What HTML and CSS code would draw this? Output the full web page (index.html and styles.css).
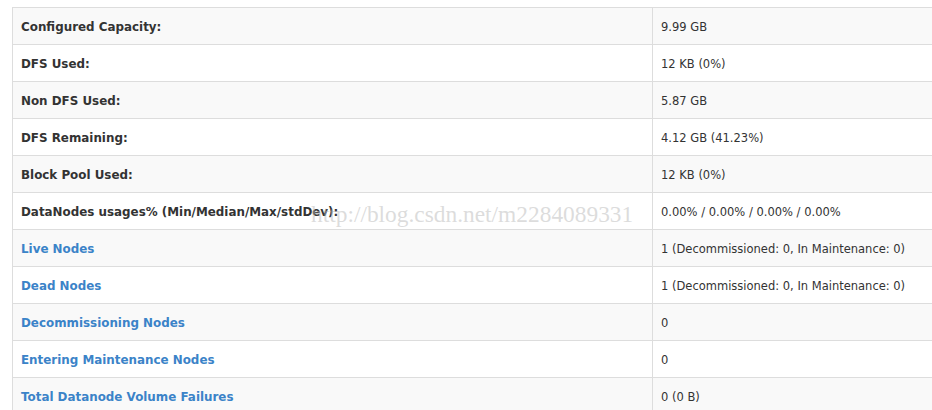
FILE: index.html
```html
<!DOCTYPE html>
<html>
<head>
<meta charset="utf-8">
<link rel="stylesheet" href="styles.css">
</head>
<body>
<div class="page">
  <table class="info">
    <colgroup><col class="c-label"><col class="c-value"></colgroup>
    <tbody>
      <tr><th>Configured Capacity:</th><td>9.99 GB</td></tr>
      <tr><th>DFS Used:</th><td>12 KB (0%)</td></tr>
      <tr><th>Non DFS Used:</th><td>5.87 GB</td></tr>
      <tr><th>DFS Remaining:</th><td>4.12 GB (41.23%)</td></tr>
      <tr><th>Block Pool Used:</th><td>12 KB (0%)</td></tr>
      <tr><th class="wm-cell">DataNodes usages% (Min/Median/Max/stdDev):<span class="watermark">http://blog.csdn.net/m2284089331</span></th><td>0.00% / 0.00% / 0.00% / 0.00%</td></tr>
      <tr><th><a href="#">Live Nodes</a></th><td>1 (Decommissioned: 0, In Maintenance: 0)</td></tr>
      <tr><th><a href="#">Dead Nodes</a></th><td>1 (Decommissioned: 0, In Maintenance: 0)</td></tr>
      <tr><th><a href="#">Decommissioning Nodes</a></th><td>0</td></tr>
      <tr><th><a href="#">Entering Maintenance Nodes</a></th><td>0</td></tr>
      <tr><th><a href="#">Total Datanode Volume Failures</a></th><td>0 (0 B)</td></tr>
    </tbody>
  </table>
</div>
</body>
</html>
```
FILE: styles.css
```css
html, body {
  margin: 0;
  padding: 0;
  background: #fff;
  overflow: hidden;
}
.page {
  padding: 7px 0 0 12px;
  width: 1400px;
}
.info {
  border-collapse: collapse;
  table-layout: fixed;
  width: 1280px;
  font-family: "DejaVu Sans", Verdana, sans-serif;
  font-size: 11.5px;
  line-height: 20px;
  color: #333;
  border: 1px solid #ddd;
}
.c-label { width: 640px; }
.c-value { width: 640px; }
.info th, .info td {
  padding: 9px 8px 7px;
  text-align: left;
  border: 1px solid #ddd;
  vertical-align: top;
  white-space: nowrap;
}
.info th {
  font-weight: bold;
  font-size: 11.9px;
}
.info td { font-weight: normal; }
.info tr:nth-child(odd) { background: #f9f9f9; }
.info a {
  color: #3b83c8;
  text-decoration: none;
}
.wm-cell { position: relative; }
.watermark {
  position: absolute;
  left: 298px;
  top: 11px;
  font-family: "Liberation Serif", serif;
  font-weight: normal;
  font-size: 23.4px;
  line-height: 20px;
  color: rgba(185, 185, 185, 0.5);
}
```
